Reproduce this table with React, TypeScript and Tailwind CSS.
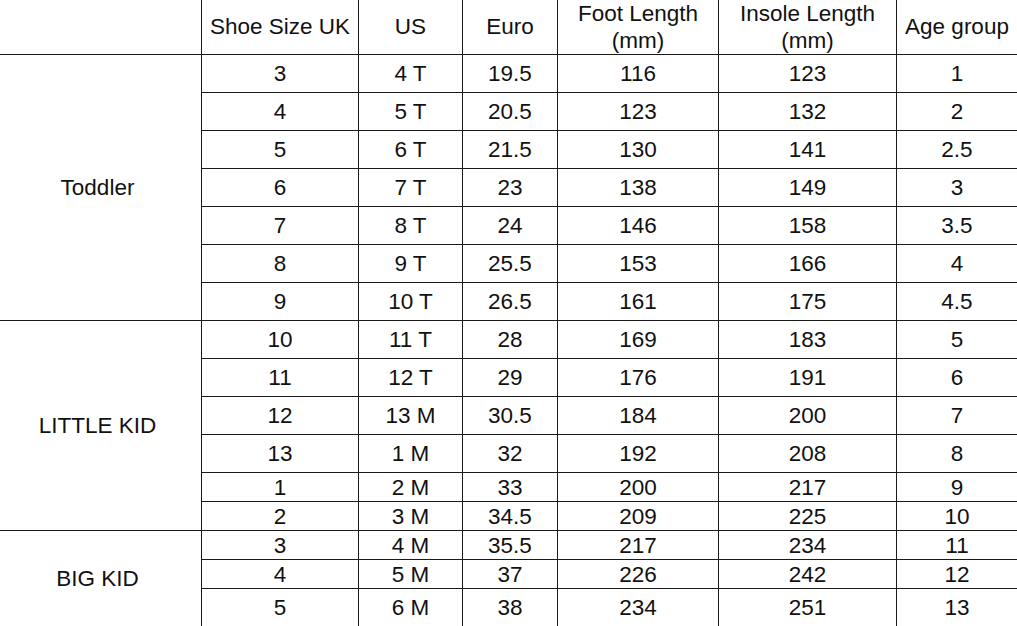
import React from "react";

type Row = [string, string, string, string, string, string];

const rows: Row[] = [
  ["3", "4 T", "19.5", "116", "123", "1"],
  ["4", "5 T", "20.5", "123", "132", "2"],
  ["5", "6 T", "21.5", "130", "141", "2.5"],
  ["6", "7 T", "23", "138", "149", "3"],
  ["7", "8 T", "24", "146", "158", "3.5"],
  ["8", "9 T", "25.5", "153", "166", "4"],
  ["9", "10 T", "26.5", "161", "175", "4.5"],
  ["10", "11 T", "28", "169", "183", "5"],
  ["11", "12 T", "29", "176", "191", "6"],
  ["12", "13 M", "30.5", "184", "200", "7"],
  ["13", "1 M", "32", "192", "208", "8"],
  ["1", "2 M", "33", "200", "217", "9"],
  ["2", "3 M", "34.5", "209", "225", "10"],
  ["3", "4 M", "35.5", "217", "234", "11"],
  ["4", "5 M", "37", "226", "242", "12"],
  ["5", "6 M", "38", "234", "251", "13"],
];

const groups: Record<number, { label: string; cls: string }> = {
  0: { label: "Toddler", cls: "row-span-7" },
  7: { label: "LITTLE KID", cls: "row-span-6" },
  13: { label: "BIG KID", cls: "row-span-3" },
};

const headers: React.ReactNode[] = [
  "Shoe Size UK",
  "US",
  "Euro",
  <>
    Foot Length
    <br />
    (mm)
  </>,
  <>
    Insole Length
    <br />
    (mm)
  </>,
  "Age group",
];

export default function App() {
  return (
    <div
      className="w-[1017px] h-[626px] overflow-hidden bg-white text-[#111] text-[22.5px]"
      style={{ fontFamily: '"Liberation Sans", Arial, sans-serif' }}
    >
      <div className="grid grid-cols-[201px_157px_104px_95px_161px_178px_121px] grid-rows-[54px_repeat(11,38px)_repeat(4,29px)_38px]">
        <div />
        {headers.map((h, i) => (
          <div
            key={"h" + i}
            className="border-l border-[#1a1a1a] flex items-center justify-center text-center leading-[27px] pb-[1px]"
          >
            <span>{h}</span>
          </div>
        ))}
        {rows.map((r, ri) => (
          <React.Fragment key={"r" + ri}>
            {groups[ri] && (
              <div
                className={`${groups[ri].cls} col-start-1 border-t border-[#1a1a1a] flex items-center justify-center leading-none pr-[6px] pt-[2px]`}
              >
                {groups[ri].label}
              </div>
            )}
            {r.map((c, ci) => (
              <div
                key={ci}
                className="border-t border-l border-[#1a1a1a] flex items-center justify-center leading-none pt-[2px]"
              >
                {c}
              </div>
            ))}
          </React.Fragment>
        ))}
      </div>
    </div>
  );
}
